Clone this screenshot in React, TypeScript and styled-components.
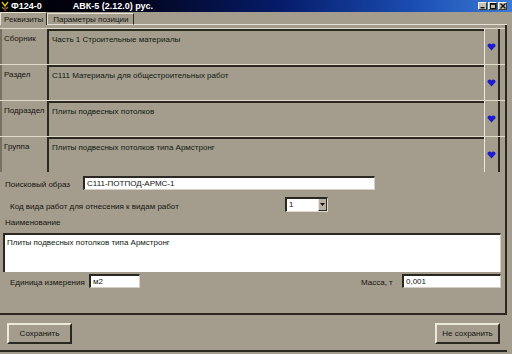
import styled, { createGlobalStyle } from "styled-components";

const GlobalStyle = createGlobalStyle`
  html, body {
    margin: 0;
    padding: 0;
    background: #a49d8d;
  }
  body {
    font-family: "Liberation Sans", Arial, sans-serif;
    font-size: 8px;
    color: #141410;
  }
`;

const fields = [
  { label: "Сборник", value: "Часть 1 Строительные материалы" },
  { label: "Раздел", value: "С111 Материалы для общестроительных работ" },
  { label: "Подраздел", value: "Плиты подвесных потолков" },
  { label: "Группа", value: "Плиты подвесных потолков типа Армстронг" },
];

const HeartIcon = () => (
  <svg width="9" height="8" viewBox="0 0 9 8">
    <path d="M4.5 7.5 L0.8 3.6 A2 2 0 0 1 4.5 1.6 A2 2 0 0 1 8.2 3.6 Z" fill="#1c1ccc" />
  </svg>
);

const AppIcon = () => (
  <svg width="9" height="11" viewBox="0 0 9 11">
    <path d="M1 1 L4 5 L7 1" stroke="#d8c020" strokeWidth="1.4" fill="none" />
    <path d="M4 5 L4 10" stroke="#c83020" strokeWidth="1.4" />
    <path d="M1 6 L3 8 M7 6 L5 8" stroke="#40a040" strokeWidth="1.2" />
  </svg>
);

export default function App() {
  return (
    <Window>
      <GlobalStyle />
      <TitleBar>
        <AppIcon />
        <TitleText>Ф124-0</TitleText>
        <TitleText $gap={31}>АВК-5 (2.12.0) рус.</TitleText>
        <WinButtons>
          <WinBtn>
            <svg width="6" height="6" viewBox="0 0 6 6">
              <rect x="0.5" y="4" width="4" height="1.4" fill="#111" />
            </svg>
          </WinBtn>
          <WinBtn>
            <svg width="6" height="6" viewBox="0 0 6 6">
              <rect x="0.5" y="0.5" width="5" height="5" stroke="#111" fill="none" />
              <rect x="0.5" y="0.5" width="5" height="1.3" fill="#111" />
            </svg>
          </WinBtn>
          <WinBtn>
            <svg width="6" height="6" viewBox="0 0 6 6">
              <path d="M0.5 0.5 L5.5 5.5 M5.5 0.5 L0.5 5.5" stroke="#111" strokeWidth="1.4" />
            </svg>
          </WinBtn>
        </WinButtons>
      </TitleBar>

      <TabStrip>
        <Tab $active $pad={3}>Реквизиты</Tab>
        <Tab $pad={5}>Параметры позиции</Tab>
        <TabRest />
      </TabStrip>

      <Panel>
        <Rows>
          {fields.map((f) => (
            <Row key={f.label}>
              <RowLabel>{f.label}</RowLabel>
              <RowValue>{f.value}</RowValue>
              <PickButton>
                <HeartIcon />
              </PickButton>
            </Row>
          ))}
        </Rows>

        <Form>
          <Line $top={4}>
            <FieldLabel $width={78}>Поисковый образ</FieldLabel>
            <TextInput $width={292}>С111-ПОТПОД-АРМС-1</TextInput>
          </Line>

          <Line $top={7} $indent={7}>
            <FieldLabel $width={275}>Код вида работ для отнесения к видам работ</FieldLabel>
            <Combo>
              <ComboText>1</ComboText>
              <ComboArrow>
                <svg width="5" height="3" viewBox="0 0 5 3">
                  <path d="M0 0 L5 0 L2.5 3 Z" fill="#111" />
                </svg>
              </ComboArrow>
            </Combo>
          </Line>

          <SectionLabel>Наименование</SectionLabel>
          <TextArea>Плиты подвесных потолков типа Армстронг</TextArea>

          <Line $top={2} $indent={7}>
            <FieldLabel $width={79}>Единица измерения</FieldLabel>
            <TextInput $width={51}>м2</TextInput>
            <Spacer />
            <FieldLabel $width={41}>Масса, т</FieldLabel>
            <TextInput $width={99}>0,001</TextInput>
          </Line>
        </Form>
      </Panel>

      <Footer>
        <PushButton>Сохранить</PushButton>
        <PushButton>Не сохранить</PushButton>
      </Footer>
    </Window>
  );
}

const Window = styled.div`
  width: 512px;
  height: 354px;
  background: #a49d8d;
  display: flex;
  flex-direction: column;
  overflow: hidden;
`;

const TitleBar = styled.div`
  height: 12px;
  display: flex;
  align-items: center;
  padding-left: 1px;
  background: linear-gradient(90deg, #000000 0%, #02041a 25%, #061c6a 55%, #1a4cb0 80%, #3a7ad4 100%);
  color: #ffffff;
  font-weight: bold;
  font-size: 9px;
`;

const TitleText = styled.span<{ $gap?: number }>`
  margin-left: ${(p) => p.$gap ?? 1}px;
  white-space: nowrap;
`;

const WinButtons = styled.div`
  margin-left: auto;
  margin-right: 5px;
  display: flex;
  gap: 1px;
`;

const WinBtn = styled.div`
  width: 9px;
  height: 8px;
  box-sizing: border-box;
  display: flex;
  align-items: center;
  justify-content: center;
  background: #c4c0b6;
  border: 1px solid;
  border-color: #f4f2ea #3c3a34 #3c3a34 #f4f2ea;
`;

const TabStrip = styled.div`
  height: 13px;
  display: flex;
  align-items: stretch;
`;

const Tab = styled.div<{ $active?: boolean; $pad: number }>`
  padding: 0 ${(p) => p.$pad}px;
  display: flex;
  align-items: center;
  white-space: nowrap;
  border-top: 1px solid #e6e1d4;
  border-left: 1px solid #e6e1d4;
  border-right: 1px solid #2b2822;
  border-bottom: ${(p) => (p.$active ? "none" : "1px solid #e6e1d4")};
  margin-top: ${(p) => (p.$active ? "0" : "1px")};
`;

const TabRest = styled.div`
  flex: 1;
  border-bottom: 1px solid #e6e1d4;
  margin-right: 5px;
`;

const Panel = styled.div`
  height: 290px;
  box-sizing: border-box;
  margin-right: 5px;
  border-right: 2px solid #2b2822;
  border-bottom: 2px solid #2b2822;
  padding-top: 3px;
  display: flex;
  flex-direction: column;
`;

const Rows = styled.div`
  display: flex;
  flex-direction: column;
`;

const Row = styled.div`
  height: 36px;
  display: flex;
  box-sizing: border-box;
  border-top: 1px solid #e0dacb;
  padding-right: 5px;
`;

const RowLabel = styled.div`
  width: 47px;
  padding: 5px 0 0 2px;
  box-sizing: border-box;
  border-left: 2px solid #77715f;
  white-space: nowrap;
`;

const RowValue = styled.div`
  flex: 1;
  box-sizing: border-box;
  padding: 4px 0 0 3px;
  border-top: 2px solid #2b2822;
  border-left: 2px solid #2b2822;
  color: #0f1a10;
`;

const PickButton = styled.div`
  width: 16px;
  box-sizing: border-box;
  display: flex;
  align-items: center;
  justify-content: center;
  border-left: 1px solid #ece8dc;
  border-right: 2px solid #2b2822;
  padding-top: 1px;
`;

const Form = styled.div`
  display: flex;
  flex-direction: column;
  padding: 0 4px 0 3px;
`;

const Line = styled.div<{ $top: number; $indent?: number }>`
  display: flex;
  align-items: center;
  margin-top: ${(p) => p.$top}px;
  padding-left: ${(p) => p.$indent ?? 2}px;
`;

const FieldLabel = styled.span<{ $width: number }>`
  width: ${(p) => p.$width}px;
  flex-shrink: 0;
  white-space: nowrap;
  padding-top: 3px;
`;

const TextInput = styled.div<{ $width: number }>`
  width: ${(p) => p.$width}px;
  height: 14px;
  box-sizing: border-box;
  background: #ffffff;
  border-top: 2px solid #2b2822;
  border-left: 2px solid #2b2822;
  border-right: 1px solid #d4cfc2;
  border-bottom: 1px solid #d4cfc2;
  padding: 0 2px;
  line-height: 11px;
  white-space: nowrap;
`;

const Combo = styled.div`
  width: 43px;
  height: 15px;
  box-sizing: border-box;
  display: flex;
  border-top: 2px solid #2b2822;
  border-left: 2px solid #2b2822;
  border-right: 1px solid #e0dacb;
  border-bottom: 1px solid #e0dacb;
  background: #ffffff;
`;

const ComboText = styled.div`
  flex: 1;
  padding-left: 2px;
  line-height: 12px;
`;

const ComboArrow = styled.div`
  width: 9px;
  box-sizing: border-box;
  display: flex;
  align-items: center;
  justify-content: center;
  background: #b8b2a4;
  border-left: 1px solid #ece8dc;
  border-right: 1px solid #2b2822;
  border-bottom: 1px solid #2b2822;
`;

const SectionLabel = styled.div`
  margin-top: 6px;
  padding-left: 2px;
  height: 12px;
`;

const TextArea = styled.div`
  margin-top: 3px;
  height: 39px;
  box-sizing: border-box;
  background: #ffffff;
  border-top: 2px solid #2b2822;
  border-left: 2px solid #2b2822;
  border-right: 1px solid #d4cfc2;
  padding: 3px 2px;
  color: #0f1a10;
`;

const Spacer = styled.div`
  flex: 1;
`;

const Footer = styled.div`
  height: 37px;
  box-sizing: border-box;
  display: flex;
  align-items: center;
  justify-content: space-between;
  padding: 2px 7px 0 7px;
  margin-right: 5px;
  border-bottom: 2px solid #2b2822;
`;

const PushButton = styled.div`
  width: 65px;
  height: 21px;
  box-sizing: border-box;
  display: flex;
  align-items: center;
  justify-content: center;
  border: 2px solid;
  border-color: #ece8dc #2b2822 #2b2822 #ece8dc;
  white-space: nowrap;
`;
